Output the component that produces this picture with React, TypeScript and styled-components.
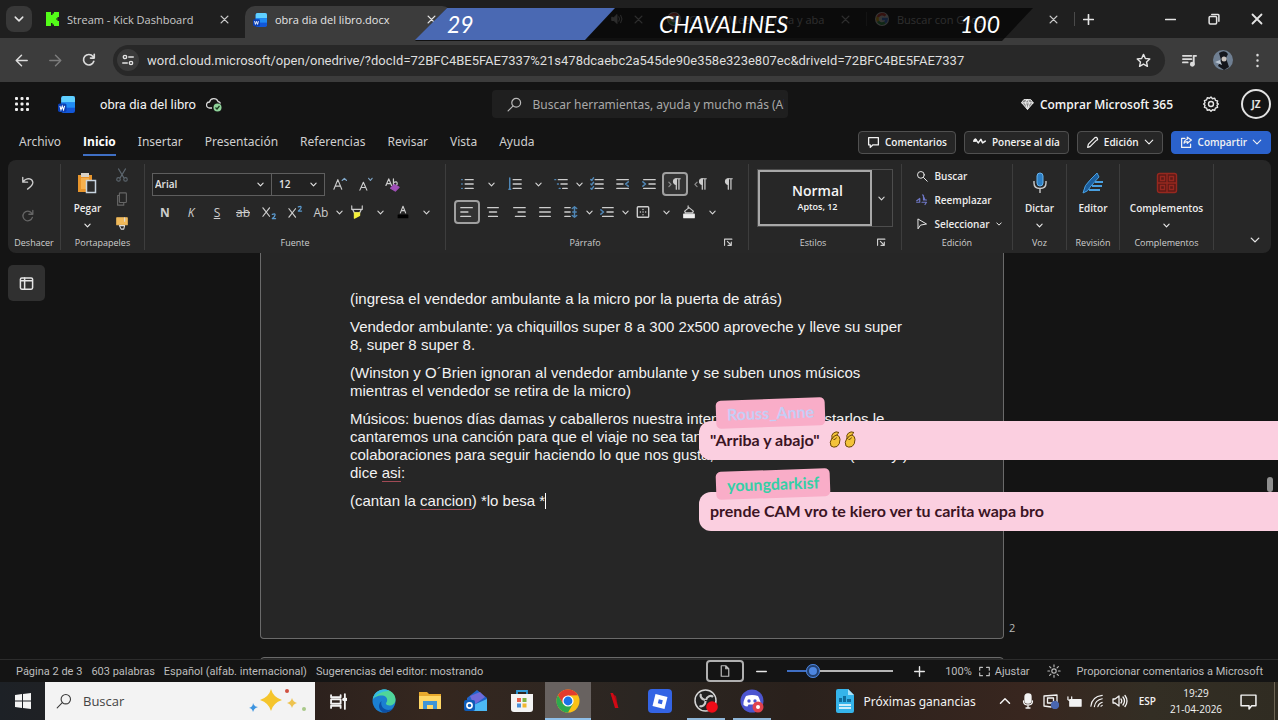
import React from "react";
import styled, { createGlobalStyle, css } from "styled-components";

const ui = `"Open Sans", "Noto Sans", sans-serif`;
const uiWide = `"Noto Sans", "Open Sans", sans-serif`;

const GlobalStyle = createGlobalStyle`
  * { box-sizing: border-box; }
  html, body, #root { height: 100%; }
  body { margin: 0; background: #141414; color: #e4e4e4; font-family: ${ui}; font-size: 12px; }
  button, input, select { font: inherit; color: inherit; background: none; border: 0; padding: 0; margin: 0; outline: 0; }
  button { cursor: pointer; white-space: nowrap; }
  p { margin: 0; }
  svg { display: block; flex: none; }
`;

/* ---------- icons ---------- */

type IconProps = { size?: number; children: React.ReactNode; w?: number; color?: string };
const Icon = ({ size = 16, w = 1.3, color = "currentColor", children }: IconProps) => (
  <svg width={size} height={size} viewBox="0 0 16 16" fill="none" stroke={color} strokeWidth={w} strokeLinecap="round" strokeLinejoin="round" aria-hidden="true">
    {children}
  </svg>
);
const Chevron = ({ size = 7, w = 2.6 }: { size?: number; w?: number }) => (
  <Icon size={size} w={w}><path d="M2 5l6 6 6-6" /></Icon>
);
const Cross = ({ size = 9 }: { size?: number }) => <Icon size={size} w={2.4}><path d="M2 2l12 12M14 2L2 14" /></Icon>;
const Magnifier = ({ size = 16, flip = false, w = 1.3 }: { size?: number; flip?: boolean; w?: number }) => (
  <Icon size={size} w={w}>{flip ? <><circle cx="6.5" cy="6.5" r="4.5" /><path d="M10 10l5 5" /></> : <><circle cx="9.8" cy="6.2" r="4.7" /><path d="M6.3 9.7L1.2 14.8" /></>}</Icon>
);
const WordLogo = ({ size = 16 }: { size?: number }) => (
  <svg width={size} height={size} viewBox="0 0 16 16" aria-hidden="true">
    <rect x="3" y="0" width="13" height="16" rx="2" fill="#1257d8" />
    <path d="M5 0h9a2 2 0 012 2v4H3V2a2 2 0 012-2z" fill="#5fd0ff" />
    <path d="M3 6h13v5H3z" fill="#1f8cf5" />
    <rect x="0" y="7" width="8" height="8" rx="1.5" fill="#0b3fb4" />
    <path d="M1.8 9.2l1 3.8 1.2-3.4L5.2 13l1-3.8" fill="none" stroke="#fff" strokeWidth="1" />
  </svg>
);
const GoogleLogo = () => (
  <svg width="14" height="14" viewBox="0 0 14 14" fill="none" strokeWidth="2.6" aria-hidden="true">
    <circle cx="7" cy="7" r="7" fill="#f4f4f4" />
    <path d="M10.500 3.600A4.700 4.700 0 002.800 5" stroke="#ea4335" />
    <path d="M2.800 5A4.700 4.700 0 003 9.400" stroke="#fbbc05" />
    <path d="M3 9.400A4.700 4.700 0 0010 10.600" stroke="#34a853" />
    <path d="M10 10.600A4.700 4.700 0 0011.600 7H7" stroke="#4285f4" />
  </svg>
);

type ListKind = "bullets" | "numbers" | "levels" | "check" | "outdent" | "indent" | "left" | "center" | "right" | "justify" | "spacing" | "special";
const lineSets: Record<ListKind, string> = {
  bullets: "M6 3h9M6 8h9M6 13h9", numbers: "M6 3h9M6 8h9M6 13h9", levels: "M5 3h10M8 8h7M10 13h5", check: "M6 3h9M6 8h9M6 13h9",
  outdent: "M1 3h13M1 8h7M1 13h13", indent: "M2 3h13M8 8h7M2 13h13",
  left: "M1 3h13M1 8h8M1 13h11", center: "M2 3h12M4 8h8M3 13h10", right: "M2 3h13M7 8h8M4 13h11", justify: "M2 3h12M2 8h12M2 13h12",
  spacing: "M1 3h6M1 8h6M1 13h6", special: "M3 3h12M8 8h7M3 13h12",
};
const accentSets: Partial<Record<ListKind, string>> = {
  bullets: "M2 3h.5M2 8h.5M2 13h.5", numbers: "M2 1v13M1 14h2", levels: "M1 3h1M4 8h1M6 13h1", check: "M1 3l1 1 2-3M1 8l1 1 2-3M1 13l1 1 2-3",
  outdent: "M14 5.500L11 8l3 2.500", indent: "M1 5.500L4 8l-3 2.500", spacing: "M12 2v12M9.500 4L12 2l2.500 2M9.500 12L12 14l2.500-2M10 8h4", special: "M1 5.500L4 8l-3 2.500",
};
const Lines = ({ kind }: { kind: ListKind }) => (
  <Icon size={14} w={1.7}>
    <path d={lineSets[kind]} />
    {accentSets[kind] && <path d={accentSets[kind]} stroke="#4f86b5" />}
  </Icon>
);
const Pilcrow = ({ arrow, back }: { arrow?: boolean; back?: boolean }) => (
  <Icon size={14} w={1.4}>
    <path d="M9 2h5M9.500 2v12M12.500 2v12" /><path d="M9.500 2a3.200 3.200 0 000 6.400z" fill="currentColor" />
    {arrow && <path d={back ? "M3.500 6L1 8.500 3.500 11" : "M1 6l2.500 2.500L1 11"} stroke="#8a8a8a" />}
  </Icon>
);

/* ---------- browser chrome ---------- */

const Screen = styled.div`display: flex; flex-direction: column; height: 100vh; overflow: hidden; position: relative;`;

const TabStrip = styled.div`display: flex; align-items: stretch; height: 38px; background: #1f1f1f; flex: none;`;
const TabMenu = styled.button`width: 26px; height: 26px; margin: 6px 6px 0; border-radius: 8px; background: #383838; display: grid; place-items: center;`;
const Tab = styled.div<{ $active?: boolean }>`
  flex: 0 1 207px; min-width: 0; display: flex; align-items: center; gap: 8px; padding: 0 14px 0 8px; color: #c9c9c9;
  ${(p) => p.$active && css`background: #3c3c3c; border-radius: 10px 10px 0 0; color: #e6e6e6; margin-top: 6px; padding-bottom: 5px;`}
`;
const TabTitle = styled.span`flex: 1; min-width: 0; overflow: hidden; white-space: nowrap; font-size: 11px;`;
const TabEnd = styled.div`width: 1px; height: 14px; background: #4a4a4a; align-self: center;`;
const TabClose = styled.button`display: grid; place-items: center; width: 14px; height: 14px;`;
const NewTab = styled(TabClose)`width: 26px; height: 38px;`;
const WindowButtons = styled.div`margin-left: auto; display: flex;`;
const WindowButton = styled.button`width: 43px; display: grid; place-items: center;`;

const Toolbar = styled.div`display: flex; align-items: center; height: 44px; padding: 0 4px; background: #3c3c3c; flex: none;`;
const NavButton = styled.button<{ $dim?: boolean }>`width: 34px; height: 32px; display: grid; place-items: center; color: ${(p) => (p.$dim ? "#7c7c7c" : "#dcdcdc")};`;
const AddressBar = styled.div`flex: 1; height: 31px; margin: 0 7px; border-radius: 16px; background: #282828; display: flex; align-items: center; gap: 8px; padding: 0 14px 0 4px;`;
const SiteButton = styled.button`width: 22px; height: 22px; border-radius: 50%; background: #3a3a3a; display: grid; place-items: center;`;
const AddressInput = styled.input`flex: 1; min-width: 0; font-family: "Roboto", sans-serif; font-size: 13px; color: #dedede;`;

const Scoreboard = styled.div`position: absolute; top: 8px; left: 415px; width: 618px; height: 33px;`;
const ScoreDark = styled.div`position: absolute; inset: 0; background: rgba(6, 6, 6, 0.8); clip-path: polygon(0 100%, 32px 0, 100% 0, 587px 100%);`;
const ScoreBlue = styled.div`position: absolute; inset: 0 418px 1px 0; background: #4a69b3; clip-path: polygon(0 100%, 32px 0, 100% 0, 170px 100%);`;
const ScoreRow = styled.div`
  position: absolute; inset: 0; display: grid; grid-template-columns: 1fr auto 1fr; align-items: center; padding: 0 33px 0 32px;
  font: italic 400 23px/33px "Lato", cursive; color: #fff;
  span:last-child { text-align: right; }
`;

/* ---------- word header ---------- */

const WordHeader = styled.header`display: grid; grid-template-columns: 1fr 296px 1fr; align-items: center; height: 44px; padding: 0 7px 0 8px; flex: none;`;
const HeaderSide = styled.div<{ $end?: boolean }>`display: flex; align-items: center; justify-content: ${(p) => (p.$end ? "flex-end" : "flex-start")};`;
const AppLauncher = styled.button`width: 16px; height: 16px; margin: 0 28px 0 6px;`;
const DocTitle = styled.h1`font-family: "Roboto", sans-serif; font-size: 13px; font-weight: 400; margin: 0 10px 0 25px; color: #f2f2f2; white-space: nowrap;`;
const SearchBox = styled.label`display: flex; align-items: center; gap: 11px; height: 28px; padding: 0 4px 0 15px; border-radius: 4px; background: #1f1f1f; color: #b9b9b9; input { flex: 1; min-width: 0; font-family: ${uiWide}; font-size: 12px; } input::placeholder { color: #a9a9a9; opacity: 1; }`;
const BuyButton = styled.button`display: flex; align-items: center; gap: 6px; font-size: 12px; font-weight: 600; color: #f4f4f4;`;
const SettingsButton = styled.button`margin: 0 22px 0 30px;`;
const Avatar = styled.button`width: 30px; height: 30px; border: 2px solid #e2e2e2; border-radius: 50%; font-size: 10px; font-weight: 700;`;

const MenuBar = styled.nav`display: flex; align-items: center; gap: 22px; height: 34px; padding: 0 7px 2px 19px; flex: none;`;
const MenuTab = styled.button<{ $active?: boolean }>`
  height: 28px; font-family: ${uiWide}; font-size: 12px; color: #cfcfcf; border-bottom: 2px solid transparent; padding-top: 1px;
  ${(p) => p.$active && css`font-family: ${ui}; font-weight: 700; color: #fff; border-color: #3f6fc4;`}
`;
const MenuActions = styled.div`display: flex; gap: 8px; margin-left: auto;`;
const ActionButton = styled.button<{ $primary?: boolean }>`
  height: 23px; padding: 0 8px; display: flex; align-items: center; gap: 5px; border-radius: 4px; font-size: 10px; font-weight: 600; color: #f2f2f2;
  background: ${(p) => (p.$primary ? "#2b62cc" : "#262626")}; border: 1px solid ${(p) => (p.$primary ? "#2b62cc" : "#505050")};
`;

/* ---------- ribbon ---------- */

const Ribbon = styled.section`display: flex; height: 93px; margin: 0 7px 0 8px; padding: 4px 0 0; background: #272727; border-radius: 8px; flex: none;`;
const Group = styled.div<{ $w: number }>`flex: 0 0 ${(p) => p.$w}px; display: flex; flex-direction: column; border-right: 1px solid #3d3d3d; margin-bottom: 3px;`;
const GroupBody = styled.div<{ $pad?: string }>`flex: 1; min-height: 0; display: flex; justify-content: center; padding: ${(p) => p.$pad ?? "0"};`;
const GroupFooter = styled.div<{ $more?: boolean }>`
  height: 16px; display: grid; grid-template-columns: ${(p) => (p.$more ? "1fr 24px" : "1fr")}; align-items: center;
  text-align: center; font-size: 9px; color: #cfcfcf; white-space: nowrap;
`;
const Stack = styled.div<{ $gap?: number; $align?: string }>`display: flex; flex-direction: column; gap: ${(p) => p.$gap ?? 0}px; align-items: ${(p) => p.$align ?? "center"}; justify-content: center;`;
const PasteTools = styled(Stack)`margin-left: 8px;`;
const ToolRows = styled.div`flex: 1; display: flex; flex-direction: column; gap: 2px; justify-content: center; padding-bottom: 2px;`;
const Row = styled.div`display: flex; align-items: center; height: 26px;`;
const Tool = styled.button<{ $on?: boolean; $dim?: boolean }>`
  width: 26px; height: 24px; flex: none; display: grid; place-items: center; border-radius: 4px; border: 1px solid transparent; font-size: 12px;
  color: ${(p) => (p.$dim ? "#666" : "#cdcdcd")};
  ${(p) => p.$on && css`border: 2px solid #a0a0a0; background: #333;`}
`;
const Drop = styled.button<{ $w: number }>`width: ${(p) => p.$w}px; height: 24px; display: grid; place-items: center; color: #d6d6d6;`;
const BigTool = styled.button`display: flex; flex-direction: column; align-items: center; justify-content: flex-start; padding-top: 8px; gap: 6px; font-size: 10px; font-weight: 600; line-height: 16px; color: #ececec;`;
const Field = styled.label<{ $w: number }>`
  display: flex; align-items: center; width: ${(p) => p.$w}px; height: 23px; border: 1px solid #5e5e5e; padding: 0 7px 0 2px; background: #222;
  & + & { border-left: 0; margin-right: 2px; padding-left: 7px; }
  select { flex: 1; min-width: 0; appearance: none; font-size: 10px; font-weight: 600; }
`;
const StyleBox = styled.div`display: flex; align-items: center; height: 58px; width: 136px; border: 1px solid #4d4d4d;`;
const StyleCard = styled.button`align-self: stretch; width: 114px; border: 2px solid #a8a8a8; display: flex; flex-direction: column; align-items: center; justify-content: center; color: #f5f5f5; font-size: 14px; line-height: 18px; font-weight: 600; padding-left: 6px; small { font-size: 9px; line-height: 14px; }`;
const TextTool = styled.button`display: flex; flex: none; align-items: center; gap: 6px; height: 24px; font-size: 10px; font-weight: 600; color: #ececec;`;
const Collapse = styled.button`margin-left: auto; align-self: flex-end; padding: 8px 11px;`;

/* ---------- document ---------- */

const Canvas = styled.main`flex: 1; min-height: 0; display: flex; overflow: hidden; background: #141414;`;
const Pages = styled.div`flex: 1; min-width: 0;`;
const PageRow = styled.div`display: grid; grid-template-columns: 1fr 744px 1fr; & + & { margin-top: 18px; }`;
const Sheet = styled.article`
  background: #262626; border: 1px solid #6a6a6a; border-top: 0; border-radius: 0 0 4px 4px; height: 386px; padding: 37px 89px 0; color: #f2f2f2;
  font: 15px/18px "Liberation Sans", Arial, sans-serif; white-space: nowrap;
  p + p { margin-top: 10px; }
`;
const NextSheet = styled.article`height: 60px; background: #262626; border: 1px solid #6a6a6a; border-radius: 4px 4px 0 0;`;
const Misspelt = styled.span`border-bottom: 1px solid #a04a55;`;
const Caret = styled.i`display: inline-block; width: 1px; height: 16px; background: #fff; vertical-align: text-bottom;`;
const PaneButton = styled.button`width: 37px; height: 36px; margin: 12px 0 0 8px; border-radius: 5px; background: #303030; display: grid; place-items: center;`;
const PageNumber = styled.span`align-self: end; padding: 0 5px 4px; font-size: 11px; color: #b8b8b8;`;
const Scroller = styled.div`width: 14px; padding: 224px 5px 0 3px; &::after { content: ""; display: block; height: 15px; border-radius: 3px; background: #8f8f8f; }`;

const Chat = styled.aside`position: absolute; right: 0; top: 399px; width: 579px; display: flex; flex-direction: column; gap: 10px; font-family: "Lato", sans-serif; font-weight: 700;`;
const ChatItem = styled.div`display: flex; flex-direction: column; align-items: flex-start;`;
const ChatName = styled.span<{ $color: string }>`height: 28px; padding: 0 11px; margin: 0 0 -6px 17px; border-radius: 5px; background: #f9adc8; color: ${(p) => p.$color}; font-size: 16px; line-height: 27px; transform: rotate(-2deg); z-index: 1;`;
const Bubble = styled.p`align-self: stretch; height: 39px; padding: 0 11px 2px; border-radius: 12px 0 0 12px; background: #fbcfe0; color: #3b1424; font-size: 16px; line-height: 36px; display: flex; align-items: center;`;
const Hands = styled.span`display: flex; gap: 3px; margin-left: 9px;`;

/* ---------- bars at the bottom ---------- */

const StatusBar = styled.footer`display: flex; align-items: center; height: 23px; padding: 0 15px 0 16px; gap: 9px; font-size: 11px; color: #bdbdbd; border-top: 1px solid #2c2c2c; flex: none; white-space: nowrap; font-family: "Roboto", sans-serif;`;
const StatusEnd = styled.div`margin-left: auto; display: flex; align-items: center;`;
const ViewButton = styled.button`width: 38px; height: 22px; border: 2px solid #b0b0b0; border-radius: 4px; display: grid; place-items: center;`;
const ZoomStep = styled.button`width: 34px; display: grid; place-items: center; color: #e8e8e8;`;
const ZoomSlider = styled.input`
  appearance: none; width: 106px; height: 18px; margin: 0 9px;
  &::-webkit-slider-runnable-track { height: 2px; background: linear-gradient(90deg, #3f6fc4 24%, #b5b5b5 24%); }
  &::-webkit-slider-thumb { appearance: none; width: 14px; height: 14px; margin-top: -6px; border-radius: 50%; background: #4d86e0; border: 3px solid #23406f; outline: 1px solid #4d86e0; outline-offset: -1px; }
`;
const ZoomValue = styled.span`margin: 0 7px 0 9px;`;
const StatusButton = styled.button`display: flex; align-items: center; gap: 5px;`;
const SunButton = styled.button`margin: 0 16px 0 17px;`;

const Taskbar = styled.footer`display: flex; align-items: stretch; height: 38px; flex: none; background: linear-gradient(90deg, #1d2126 0, #2c211d 24%, #35271f 34%, #2b2622 50%, #2a211c 62%, #38261f 80%, #332e24 90%, #302c22 100%); color: #f3f3f3;`;
const StartButton = styled.button`width: 45px; display: grid; place-items: center;`;
const TaskSearch = styled.label`width: 270px; display: flex; align-items: center; gap: 11px; padding: 0 8px 0 11px; background: #f3f3f3; color: #3a3a3a; input { flex: 1; min-width: 0; font-size: 13px; } input::placeholder { color: #444; opacity: 1; }`;
const TaskApp = styled.button<{ $state?: "open" | "front" }>`
  width: 46px; display: grid; place-items: center; border-bottom: 2px solid transparent; padding-top: 2px;
  ${(p) => p.$state === "front" && css`background: #686260; border-color: #8fc0ea;`}
  ${(p) => p.$state === "open" && css`width: 38px; margin: 0 4px; border-color: #8fb6d8;`}
`;
const Tray = styled.div`margin-left: auto; display: flex; align-items: center;`;
const News = styled.button`display: flex; align-items: center; gap: 9px; margin-right: 18px; font-family: ${uiWide}; font-size: 12px;`;
const TrayButton = styled.button`width: 23px; height: 38px; display: grid; place-items: center;`;
const Language = styled.button`font-size: 10px; margin: 0 7px 0 7px; font-weight: 600;`;
const Clock = styled.time`width: 66px; text-align: center; font-size: 10px; line-height: 16px; white-space: nowrap;`;
const Notifications = styled.button`padding: 0 17px 0 11px; height: 38px; border-right: 1px solid #6d6555; margin-right: 3px;`;

/* ---------- task bar artwork ---------- */

const Art = ({ size = 24, children }: { size?: number; children: React.ReactNode }) => (
  <svg width={size} height={size} viewBox="0 0 24 24" aria-hidden="true">{children}</svg>
);
const EdgeArt = () => (
  <Art>
    <circle cx="12" cy="12" r="11.500" fill="#1b7fd1" />
    <path d="M1 10C2 4 7 .5 12 .5c6.500 0 11.500 4.500 11.500 10 0 4-3 6-6 6-2 0-3.500-1-3.500-2 0-1 1.200-1.500 1.200-3.500C15.200 8.500 13 6.500 9.500 6.500 5.500 6.500 2 8.500 1 10z" fill="#4fd59a" />
    <path d="M1 10C2 4 7 .5 12 .5c2 0 3.500.4 5 1.200C8 2.500 4 6 1 10z" fill="#35b8e6" />
    <path d="M9.500 12c-1.500 5 2.500 9 7 9 2 0 3.500-.7 5-2-2 3-5.500 4.500-9.500 4.500-5-1-7-8-2.500-11.500z" fill="#0c4fa5" />
  </Art>
);
const FolderArt = () => (
  <Art>
    <path d="M1 3h8l2 2h12v15H1z" fill="#e8a92d" /><path d="M1 7h22v13H1z" fill="#ffd766" /><path d="M5 12h14v8h-4v-4H9v4H5z" fill="#3f95d6" />
  </Art>
);
const OutlookArt = () => (
  <Art>
    <path d="M3 9l10-8 10 8v13H3z" fill="#2063c9" /><path d="M6 7l10-4 5 5-11 8z" fill="#6f6ad8" /><path d="M5 18l18-8v12H6z" fill="#4cb9f5" />
    <rect x="0" y="11" width="11" height="11" rx="2" fill="#0e5cb8" /><circle cx="5.500" cy="16.500" r="2.600" fill="none" stroke="#fff" strokeWidth="1.600" />
  </Art>
);
const StoreArt = () => (
  <Art>
    <path d="M7 6V2h10v4" fill="none" stroke="#2f9bd8" strokeWidth="1.800" /><path d="M1 5h22v15a3 3 0 01-3 3H4a3 3 0 01-3-3z" fill="#f4f4f4" />
    <path d="M7 9h4v4H7z" fill="#e8604a" /><path d="M12.500 9h4v4h-4z" fill="#7cb342" /><path d="M7 14.500h4v4H7z" fill="#4a90d9" /><path d="M12.500 14.500h4v4h-4z" fill="#f0b72f" />
  </Art>
);
const ChromeArt = () => (
  <Art>
    <circle cx="12" cy="12" r="11.500" fill="#fbc116" /><path d="M2 6.200A11.500 11.500 0 0122 6.200L12 6.500 7 15z" fill="#e33b2e" />
    <path d="M2 6.200A11.500 11.500 0 0012 23.500l5-8.700-10 .2z" fill="#2da94f" /><circle cx="12" cy="12" r="5.600" fill="#fff" /><circle cx="12" cy="12" r="4.400" fill="#1a73e8" />
  </Art>
);
const NetflixArt = () => (
  <Art><path d="M8.500 4l5.500 3 2 11-3.500-2z" fill="#a80c14" /><path d="M8.500 4h2.500l5.500 15H13z" fill="#d10a15" /></Art>
);
const RobloxArt = () => (
  <Art><rect width="24" height="24" rx="4" fill="#3464e4" /><path d="M7.500 5l12 3L16.500 20l-12-3z" fill="#fff" /><path d="M10.800 10.300l4 1-1 4-4-1z" fill="#3464e4" /></Art>
);
const ObsArt = () => (
  <Art>
    <circle cx="11.500" cy="11.500" r="10.500" fill="#222" stroke="#d6d6d6" strokeWidth="1.500" />
    <path d="M11 11c-4-1-5-4-4-6M12 11c1-4 5-5 7-3M11.500 12c0 4-3 6-6 5" fill="none" stroke="#c9c9c9" strokeWidth="2.200" /><circle cx="18" cy="18" r="5.800" fill="#f00c18" />
  </Art>
);
const DiscordArt = () => (
  <Art>
    <circle cx="12" cy="12" r="11.500" fill="#4c55cf" /><path d="M6 7q6-2 12 0 3 5 2.500 9-2 1.500-4 1.500l-1-2h-7l-1 2q-2 0-4-1.500Q3 12 6 7z" fill="#fff" />
    <circle cx="9" cy="12" r="1.700" fill="#4c55cf" /><circle cx="15" cy="12" r="1.700" fill="#4c55cf" /><circle cx="18" cy="18" r="5.500" fill="#e0424e" /><circle cx="18" cy="18" r="2" fill="#fff" />
  </Art>
);
const SparkleArt = () => (
  <svg width="58" height="26" viewBox="0 0 58 26" aria-hidden="true">
    <path d="M22 1q2 8 11 11-9 3-11 11-2-8-11-11 9-3 11-11z" fill="#f5c52c" /><path d="M43 10q1 4 5 5-4 1-5 5-1-4-5-5 4-1 5-5z" fill="#eec34f" />
    <path d="M4 15q1 4 5 4-4 1-5 5-1-4-4-4 4-1 4-5z" fill="#3c94e0" /><circle cx="38" cy="3" r="2" fill="#d0503f" /><circle cx="55" cy="21" r="2" fill="#a9c98a" />
  </svg>
);
const PinchingHand = () => (
  <svg width="12" height="17" viewBox="0 0 12 17" aria-hidden="true">
    <path d="M3 7Q2 4 4.500 2 7 0 10 1.500 8 3 8 4q3 1 3 4.500 0 5-3 7-3.500 1.500-6-.5-2-3.500 1-8z" fill="#f3c33a" stroke="#6b4608" /><path d="M3 8q2-4 5-4M4.500 8.500q2 .5 3-2" fill="none" stroke="#6b4608" />
  </svg>
);

const menu = ["Archivo", "Inicio", "Insertar", "Presentación", "Referencias", "Revisar", "Vista", "Ayuda"];

function BrowserChrome() {
  return (
    <>
      <TabStrip>
        <TabMenu aria-label="Buscar pestañas"><Chevron size={10} w={2.4} /></TabMenu>
        <Tab>
          <svg width="13" height="14" viewBox="0 0 13 14" aria-hidden="true"><path d="M0 0h5v3h1.500V1.500H8V0h5v5h-1.500v1.500H10v1h1.500V9H13v5H8v-1.500H6.500V11H5v3H0z" fill="#53fc18" /></svg>
          <TabTitle>Stream - Kick Dashboard</TabTitle><TabClose aria-label="Cerrar"><Cross /></TabClose>
        </Tab>
        <Tab $active><WordLogo size={14} /><TabTitle>obra dia del libro.docx</TabTitle><TabClose aria-label="Cerrar"><Cross /></TabClose></Tab>
        <Tab>
          <TabTitle />
          <Icon size={12}><path d="M1 6v4h3l4 4V2L4 6z" fill="currentColor" /><path d="M10.500 5q2 3 0 6M13 3q3.500 5 0 10" /></Icon>
          <TabClose aria-label="Cerrar"><Cross /></TabClose>
        </Tab>
        <Tab><GoogleLogo /><TabTitle>Google Meet - arriba y aba</TabTitle><TabClose aria-label="Cerrar"><Cross /></TabClose></Tab>
        <TabEnd />
        <Tab><GoogleLogo /><TabTitle>Buscar con Google</TabTitle><TabClose aria-label="Cerrar"><Cross /></TabClose></Tab>
        <TabEnd />
        <NewTab aria-label="Nueva pestaña"><Icon size={11} w={2.4}><path d="M8 1v14M1 8h14" /></Icon></NewTab>
        <WindowButtons>
          <WindowButton aria-label="Minimizar"><Icon size={11} w={2.2}><path d="M1 8h14" /></Icon></WindowButton>
          <WindowButton aria-label="Restaurar"><Icon size={12} w={2}><rect x="1.5" y="4.5" width="10" height="10" rx="1.5" /><path d="M5 2h8.500q1 0 1 1v8" /></Icon></WindowButton>
          <WindowButton aria-label="Cerrar ventana"><Cross size={12} /></WindowButton>
        </WindowButtons>
      </TabStrip>
      <Toolbar>
        <NavButton aria-label="Atrás"><Icon size={13} w={1.8}><path d="M15 8H1.500M8 1.500L1.500 8 8 14.500" /></Icon></NavButton>
        <NavButton aria-label="Adelante" $dim><Icon size={13} w={1.8}><path d="M1 8h13.500M8 1.500L14.500 8 8 14.500" /></Icon></NavButton>
        <NavButton aria-label="Recargar"><Icon size={14} w={1.9}><path d="M13.500 9.500A6 6 0 1112.500 4L14 5.500M14 1.500v4.300H9.700" /></Icon></NavButton>
        <AddressBar>
          <SiteButton aria-label="Información del sitio"><Icon size={12} w={1.9}><circle cx="4" cy="4" r="2.2" /><path d="M9 4h6M1 12h6" /><circle cx="12" cy="12" r="2.2" /></Icon></SiteButton>
          <AddressInput aria-label="Dirección" defaultValue="word.cloud.microsoft/open/onedrive/?docId=72BFC4BE5FAE7337%21s478dcaebc2a545de90e358e323e807ec&driveId=72BFC4BE5FAE7337" />
          <Icon size={15} w={1.5}><path d="M8 1.500l2 4.300 4.700.5-3.500 3.200 1 4.700L8 11.800l-4.200 2.400 1-4.700L1.300 6.300 6 5.800z" /></Icon>
        </AddressBar>
        <NavButton aria-label="Multimedia"><Icon size={15} w={2}><path d="M1 3h9M1 6.500h9M1 10h5M12.500 12V3h2.500" /><circle cx="11" cy="12" r="1.6" fill="currentColor" /></Icon></NavButton>
        <NavButton aria-label="Perfil">
          <svg width="20" height="20" viewBox="0 0 20 20" aria-hidden="true"><circle cx="10" cy="10" r="10" fill="#6f7f92" /><path d="M6 3q6-4 9 1l-2 4 3 9-5 3-6-4 3-6z" fill="#14161c" /><circle cx="11" cy="9" r="2.5" fill="#c9c2bd" /><path d="M2 12l5-2 2 5z" fill="#b8c3d0" /></svg>
        </NavButton>
        <NavButton aria-label="Menú"><Icon size={15} w={2.6}><path d="M8 2.200v.1M8 8v.1M8 13.800v.1" /></Icon></NavButton>
      </Toolbar>
      <Scoreboard><ScoreDark /><ScoreBlue /><ScoreRow><span>29</span><span>CHAVALINES</span><span>100</span></ScoreRow></Scoreboard>
    </>
  );
}

function WordTop() {
  return (
    <>
      <WordHeader>
        <HeaderSide>
          <AppLauncher aria-label="Aplicaciones">
            <svg width="16" height="16" viewBox="0 0 16 16" fill="#f0f0f0" aria-hidden="true">
              {[1, 6.5, 12].flatMap((y) => [1, 6.5, 12].map((x) => <rect key={`${x}-${y}`} x={x} y={y} width="3" height="3" rx="1" />))}
            </svg>
          </AppLauncher>
          <WordLogo size={17} />
          <DocTitle>obra dia del libro</DocTitle>
          <svg width="16" height="16" viewBox="0 0 16 16" fill="none" aria-hidden="true"><path d="M6 12H3.500a3 3 0 010-6A4.500 4.500 0 0112 5.500q2 .5 2.500 2" stroke="#d8d8d8" strokeWidth="1.3" /><circle cx="11.500" cy="11.500" r="4" fill="#8fd39a" /><path d="M9.500 11.500l1.500 1.500 2.500-3" stroke="#17361d" strokeWidth="1.2" /></svg>
        </HeaderSide>
        <SearchBox><Magnifier size={15} /><input aria-label="Buscar" placeholder="Buscar herramientas, ayuda y mucho más (Alt + Q)" /></SearchBox>
        <HeaderSide $end>
          <BuyButton><Icon size={13} w={1.2}><path d="M4 2h8l3 4-7 8-7-8z" fill="#8c8c8c" /><path d="M1 6h14M5.500 6L8 14l2.500-8L8 2z" /></Icon>Comprar Microsoft 365</BuyButton>
          <SettingsButton aria-label="Configuración"><Icon size={16} w={1.4}><path d="M8 1l1.500 1.700 2.200-.6.700 2.200 2.200.7-.6 2.200L15.500 8 14 9.200l.6 2.200-2.200.7-.7 2.200-2.200-.6L8 15.200l-1.500-1.500-2.200.6-.7-2.200-2.200-.7.600-2.200L.7 8 2 6.800l-.6-2.200 2.200-.7.700-2.200 2.200.6z" /><circle cx="8" cy="8" r="2.5" /></Icon></SettingsButton>
          <Avatar>JZ</Avatar>
        </HeaderSide>
      </WordHeader>
      <MenuBar>
        {menu.map((m) => <MenuTab key={m} $active={m === "Inicio"}>{m}</MenuTab>)}
        <MenuActions>
          <ActionButton><Icon size={13} w={1.6}><path d="M2 2h12v9H7l-3 3v-3H2z" /></Icon>Comentarios</ActionButton>
          <ActionButton><Icon size={14} w={1.8}><path d="M1 7l2-2 3 4 3-4 2 4 3-2" /><circle cx="2.500" cy="6" r="1" /></Icon>Ponerse al día</ActionButton>
          <ActionButton><Icon size={13} w={1.5}><path d="M2 14l1-4 8-8q2-1 3 1t-1 2l-8 8z" /></Icon>Edición<Chevron size={10} w={1.8} /></ActionButton>
          <ActionButton $primary><Icon size={13} w={1.5}><path d="M6 3H2v11h11v-4M9 1.500L14 5l-5 4V7q-3 0-4 2 0-4 4-5z" /></Icon>Compartir<Chevron size={10} w={1.8} /></ActionButton>
        </MenuActions>
      </MenuBar>
    </>
  );
}

const Launcher = () => <button aria-label="Más opciones"><Icon size={9} w={2}><path d="M1 13V2h13M6 6l6 6M13 7v6H7" /></Icon></button>;
const Footer = ({ label, more }: { label: string; more?: boolean }) => <GroupFooter $more={more}><span>{label}</span>{more && <Launcher />}</GroupFooter>;

function WordRibbon() {
  return (
    <Ribbon>
      <Group $w={53}>
        <GroupBody $pad="0 12px 0 0">
          <Stack $gap={9}>
            <Tool aria-label="Deshacer"><Icon size={14} w={1.5}><path d="M2 1.500V7h5.500M2 7q3-4 7-4 4 .5 4.500 4t-6 8" /></Icon></Tool>
            <Tool aria-label="Rehacer" $dim><Icon size={14} w={1.5}><path d="M13 9.500A5.500 5.500 0 1112 4.500L13.500 6M13.500 1.500V6H9" /></Icon></Tool>
          </Stack>
        </GroupBody>
        <Footer label="Deshacer" />
      </Group>
      <Group $w={84}>
        <GroupBody $pad="0 0 0 4px">
          <BigTool>
            <svg width="20" height="22" viewBox="0 0 20 22" aria-hidden="true"><path d="M1 3h14v17H1z" fill="#e8952c" /><path d="M4 6h8v11H4z" fill="#f6b04d" /><path d="M4 1h8v4H4z" fill="#d9d3c8" /><path d="M9.500 8.500h9v12h-9z" fill="#2b2b2b" stroke="#c8d4e0" strokeWidth="1.5" /></svg>
            Pegar<Chevron />
          </BigTool>
          <PasteTools>
            <Tool aria-label="Cortar" $dim><Icon size={14} w={1.3} color="#5c666e"><path d="M4 1l6 10M12 1L6 11" /><circle cx="4" cy="13" r="2" /><circle cx="12" cy="13" r="2" /></Icon></Tool>
            <Tool aria-label="Copiar" $dim><Icon size={14} w={1.3}><rect x="5" y="1" width="8" height="11" rx="1" /><path d="M5 4H3v11h7v-2" /></Icon></Tool>
            <Tool aria-label="Copiar formato"><Icon size={14} w={1.2} color="#ddd"><path d="M2 2h12v8H2z" fill="#f0b95a" stroke="#f0b95a" /><path d="M11 2v4M5 11h6l-1 4H7z" /></Icon></Tool>
          </PasteTools>
        </GroupBody>
        <Footer label="Portapapeles" />
      </Group>
      <Group $w={301}>
        <GroupBody $pad="0 7px">
          <ToolRows>
            <Row>
              <Field $w={120}><select aria-label="Fuente"><option>Arial</option></select><Chevron /></Field>
              <Field $w={53}><select aria-label="Tamaño"><option>12</option></select><Chevron /></Field>
              <Tool aria-label="Aumentar"><Icon size={14}><path d="M1 14L5.500 3 10 14M2.500 10.500h6" /><path d="M10.500 4L13 1.500 15.500 4" stroke="#7fa6c8" /></Icon></Tool>
              <Tool aria-label="Reducir"><Icon size={14}><path d="M1 15L5 6l4 9M2.500 12h5" /><path d="M11 1.500L13 4l2-2.500" stroke="#7fa6c8" /></Icon></Tool>
              <Tool aria-label="Borrar formato"><Icon size={15}><path d="M1 9l3-7 3 7M2 7h4M9 2v7M9 6q4-2 4 1t-4 2" /><path d="M6 12l4-4 5 3-4 4z" fill="#a04fb8" stroke="#a04fb8" /></Icon></Tool>
            </Row>
            <Row>
              <Tool><b>N</b></Tool><Tool><i>K</i></Tool><Tool><u>S</u></Tool><Tool><s>ab</s></Tool>
              <Tool aria-label="Subíndice"><Icon size={15}><path d="M1 3l7 9M8 3l-7 9" /><path d="M11 10q3-1.500 3 .5T11 14.500h3.500" stroke="#5b9bd0" /></Icon></Tool>
              <Tool aria-label="Superíndice"><Icon size={15}><path d="M1 4l7 9M8 4l-7 9" /><path d="M11 2q3-1.500 3 .5T11 6.500h3.500" stroke="#5b9bd0" /></Icon></Tool>
              <Tool>Ab</Tool><Drop $w={10} aria-label="Mayúsculas"><Chevron /></Drop>
              <Tool aria-label="Resaltar"><Icon size={14}><path d="M2 1v4h12V1M3 5l2 4h6l2-4" /><path d="M5 9h6v3l-6 3z" fill="#f4f03c" stroke="#f4f03c" /></Icon></Tool><Drop $w={20} aria-label="Color de resaltado"><Chevron /></Drop>
              <Tool aria-label="Color de fuente"><Icon size={14}><path d="M5 9l3-7.500L11 9M6 6.500h4" /><path d="M2.500 11.500h11v3h-11z" fill="#000" stroke="#000" /></Icon></Tool><Drop $w={20} aria-label="Color"><Chevron /></Drop>
            </Row>
          </ToolRows>
        </GroupBody>
        <Footer label="Fuente" />
      </Group>
      <Group $w={303}>
        <GroupBody $pad="0 8px">
          <ToolRows>
            <Row>
              <Tool aria-label="Viñetas"><Lines kind="bullets" /></Tool><Drop $w={22} aria-label="Tipo de viñeta"><Chevron /></Drop>
              <Tool aria-label="Numeración"><Lines kind="numbers" /></Tool><Drop $w={20} aria-label="Tipo de número"><Chevron /></Drop>
              <Tool aria-label="Multinivel"><Lines kind="levels" /></Tool><Drop $w={10} aria-label="Niveles"><Chevron /></Drop>
              <Tool aria-label="Lista"><Lines kind="check" /></Tool><Tool aria-label="Menos sangría"><Lines kind="outdent" /></Tool><Tool aria-label="Más sangría"><Lines kind="indent" /></Tool>
              <Tool $on aria-label="Izquierda a derecha"><Pilcrow arrow /></Tool><Tool aria-label="Derecha a izquierda"><Pilcrow arrow back /></Tool><Tool aria-label="Marcas"><Pilcrow /></Tool>
            </Row>
            <Row>
              <Tool $on aria-label="Izquierda"><Lines kind="left" /></Tool><Tool aria-label="Centro"><Lines kind="center" /></Tool><Tool aria-label="Derecha"><Lines kind="right" /></Tool><Tool aria-label="Justificar"><Lines kind="justify" /></Tool>
              <Tool aria-label="Interlineado"><Lines kind="spacing" /></Tool><Drop $w={10} aria-label="Espaciado"><Chevron /></Drop>
              <Tool aria-label="Sangría especial"><Lines kind="special" /></Tool><Drop $w={10} aria-label="Sangrías"><Chevron /></Drop>
              <Tool aria-label="Bordes"><Icon size={14} w={1.6}><rect x="1.5" y="2" width="13" height="12" rx="1" /><path d="M5 8h.1M8 8h.1M11 8h.1M8 5v.1M8 11v.1" /></Icon></Tool><Drop $w={20} aria-label="Tipo de borde"><Chevron /></Drop>
              <Tool aria-label="Sombreado"><Icon size={14} w={1.3}><path d="M7 1v3M3 7l5-4 5 4-1 2H4z" /><path d="M2 10.500h12v4H2z" fill="#eee" stroke="#eee" /></Icon></Tool><Drop $w={20} aria-label="Color de sombreado"><Chevron /></Drop>
            </Row>
          </ToolRows>
        </GroupBody>
        <Footer label="Párrafo" more />
      </Group>
      <Group $w={153}>
        <GroupBody $pad="5px 8px 0 7px">
          <StyleBox><StyleCard>Normal<small>Aptos, 12</small></StyleCard><Drop $w={20} aria-label="Más estilos"><Chevron /></Drop></StyleBox>
        </GroupBody>
        <Footer label="Estilos" more />
      </Group>
      <Group $w={111}>
        <GroupBody $pad="1px 0 0 4px">
          <Stack $align="flex-start">
            <TextTool><Magnifier size={12} flip />Buscar</TextTool>
            <TextTool><Icon size={12} w={1.6} color="#6f78c8"><path d="M9 1l3 7M10 2v6h4M1 9l4-3M5 6v5H1M8 11h6l-2 3" /></Icon>Reemplazar</TextTool>
            <TextTool><Icon size={12}><path d="M3 1.500l11 6.500-8 1.500L3 14z" /></Icon>Seleccionar<Chevron size={6} /></TextTool>
          </Stack>
        </GroupBody>
        <Footer label="Edición" />
      </Group>
      <Group $w={54}>
        <GroupBody>
          <BigTool>
            <svg width="16" height="22" viewBox="0 0 16 22" fill="none" aria-hidden="true"><rect x="5" y="1" width="6" height="13" rx="3" fill="#2d7fc4" stroke="#67b4ee" /><path d="M2 9v2q0 5.500 6 5.500t6-5.500V9M8 17v4" stroke="#c9c9c9" strokeWidth="1.4" /></svg>
            Dictar<Chevron />
          </BigTool>
        </GroupBody>
        <Footer label="Voz" />
      </Group>
      <Group $w={53}>
        <GroupBody>
          <BigTool>
            <svg width="22" height="22" viewBox="0 0 22 22" fill="none" aria-hidden="true"><path d="M1 21q1-8 8-14l6-6 2 4-8 9q-3 6-8 7z" fill="#1c5f9e" stroke="#4aa0e0" /><path d="M13 10h8M10 14h10M7 18h11" stroke="#4aa0e0" strokeWidth="2.2" /></svg>
            Editor
          </BigTool>
        </GroupBody>
        <Footer label="Revisión" />
      </Group>
      <Group $w={94}>
        <GroupBody>
          <BigTool>
            <svg width="22" height="22" viewBox="0 0 22 22" fill="none" stroke="#96281f" strokeWidth="1.4" aria-hidden="true"><rect x="1.5" y="1.5" width="19" height="19" rx="2" fill="#5c1a17" /><path d="M11 1.500v19M1.500 11h19M4.500 4.500h4v4h-4zM13.500 4.500h4v4h-4zM4.500 13.500h4v4h-4zM13.500 13.500h4v4h-4z" /></svg>
            Complementos<Chevron />
          </BigTool>
        </GroupBody>
        <Footer label="Complementos" />
      </Group>
      <Collapse aria-label="Contraer cinta"><Chevron size={10} w={2.2} /></Collapse>
    </Ribbon>
  );
}

function Document() {
  return (
    <Canvas>
      <Pages>
        <PageRow>
          <div><PaneButton aria-label="Navegación"><Icon size={15} w={1.6}><rect x="1.5" y="2" width="13" height="12" rx="1.5" /><path d="M6 2v12M2 5h12" /></Icon></PaneButton></div>
          <Sheet>
            <p>(ingresa el vendedor ambulante a la micro por la puerta de atrás)</p>
            <p>Vendedor ambulante: ya chiquillos super 8 a 300 2x500 aproveche y lleve su super<br />8, super 8 super 8.</p>
            <p>(Winston y O´Brien ignoran al vendedor ambulante y se suben unos músicos<br />mientras el vendedor se retira de la micro)</p>
            <p>
              Músicos: buenos días damas y caballeros nuestra intención no es molestarlos le<br />
              cantaremos una canción para que el viaje no sea tan aburrido y se aceptan<br />
              colaboraciones para seguir haciendo lo que nos gusta, la canción se llama (no soy )<br />
              dice <Misspelt>asi</Misspelt>:
            </p>
            <p>(cantan la <Misspelt>cancion</Misspelt>) *lo besa *<Caret /></p>
          </Sheet>
          <PageNumber>2</PageNumber>
        </PageRow>
        <PageRow><div /><NextSheet /><div /></PageRow>
      </Pages>
      <Scroller />
    </Canvas>
  );
}

function Bottom() {
  return (
    <>
      <StatusBar>
        <span>Página 2 de 3</span><span>603 palabras</span><span>Español (alfab. internacional)</span><span>Sugerencias del editor: mostrando</span>
        <StatusEnd>
          <ViewButton aria-label="Vista de página"><Icon size={12} w={1.6}><path d="M3 1h6l4 4v10H3zM9 1v4h4" /></Icon></ViewButton>
          <ZoomStep aria-label="Alejar"><Icon size={11} w={2}><path d="M1 8h14" /></Icon></ZoomStep>
          <ZoomSlider type="range" aria-label="Zoom" min={0} max={100} defaultValue={20} />
          <ZoomStep aria-label="Acercar"><Icon size={11} w={2}><path d="M1 8h14M8 1v14" /></Icon></ZoomStep>
          <ZoomValue>100%</ZoomValue>
          <StatusButton><Icon size={11} w={1.7}><path d="M1 6V2h4M11 2h4v4M15 10v4h-4M5 14H1v-4" /></Icon>Ajustar</StatusButton>
          <SunButton aria-label="Modo de lectura"><Icon size={14} w={1.3}><circle cx="8" cy="8" r="2.5" /><path d="M8 1v2M8 13v2M1 8h2M13 8h2M3 3l1.500 1.500M11.500 11.500L13 13M13 3l-1.500 1.500M4.500 11.500L3 13" /></Icon></SunButton>
          <StatusButton>Proporcionar comentarios a Microsoft</StatusButton>
        </StatusEnd>
      </StatusBar>
      <Taskbar>
        <StartButton aria-label="Inicio"><svg width="16" height="16" viewBox="0 0 16 16" fill="#f5f5f5" aria-hidden="true"><path d="M0 2l7-1v6.500H0zM8 .9L16 0v7.500H8zM0 8.500h7V15l-7-1zM8 8.500h8V16l-8-1z" /></svg></StartButton>
        <TaskSearch><Magnifier size={16} w={1.1} /><input aria-label="Buscar en Windows" placeholder="Buscar" /><SparkleArt /></TaskSearch>
        <TaskApp aria-label="Vista de tareas"><Icon size={17} w={1.7}><path d="M1 2v2h9V2M1 14v-2h9v2M1 6h9v4H1zM14 1v14" /><path d="M13 6h2" strokeWidth="3" /></Icon></TaskApp>
        <TaskApp aria-label="Edge"><EdgeArt /></TaskApp>
        <TaskApp aria-label="Explorador"><FolderArt /></TaskApp>
        <TaskApp aria-label="Outlook"><OutlookArt /></TaskApp>
        <TaskApp aria-label="Store"><StoreArt /></TaskApp>
        <TaskApp aria-label="Chrome" $state="front"><ChromeArt /></TaskApp>
        <TaskApp aria-label="Netflix"><NetflixArt /></TaskApp>
        <TaskApp aria-label="Roblox"><RobloxArt /></TaskApp>
        <TaskApp aria-label="OBS" $state="open"><ObsArt /></TaskApp>
        <TaskApp aria-label="Discord" $state="open"><DiscordArt /></TaskApp>
        <Tray>
          <News>
            <svg width="18" height="24" viewBox="0 0 18 24" aria-hidden="true"><path d="M0 2q0-2 2-2h10l6 6v16q0 2-2 2H2q-2 0-2-2z" fill="#35b4ea" /><path d="M12 0l6 6h-6z" fill="#a9e2fa" /><path d="M3 13V9h3v4zM7 13V7h3v6zM11 13v-3h4v3z" fill="#106c9c" /><path d="M3 16h12M3 19h12" stroke="#fff" strokeWidth="1.5" /></svg>
            Próximas ganancias
          </News>
          <TrayButton aria-label="Iconos ocultos"><Icon size={12} w={2}><path d="M2 11l6-6 6 6" /></Icon></TrayButton>
          <TrayButton aria-label="Micrófono"><Icon size={16}><rect x="5" y="1" width="6" height="9" rx="2.5" fill="currentColor" /><path d="M3.500 8q0 4 4.500 4t4.500-4M8 12v3M6 15h4" /></Icon></TrayButton>
          <TrayButton aria-label="Pantalla"><Icon size={16}><path d="M14 9V2L1 3v10l7 1" /><rect x="4.5" y="5" width="6" height="5" /><circle cx="12" cy="12" r="3.5" fill="#4a67b0" stroke="#4a67b0" /></Icon></TrayButton>
          <TrayButton aria-label="Batería"><Icon size={15}><path d="M3 6h12v7H3z" fill="currentColor" /><path d="M1 3v3q2 2 4 0V3" /></Icon></TrayButton>
          <TrayButton aria-label="Red"><Icon size={14}><path d="M1 14Q2 3 14 1.500M5 14.500Q6 7 14 5.500M9 14.500q1-4 5-5M12.500 14l1.500-1" /></Icon></TrayButton>
          <TrayButton aria-label="Volumen"><Icon size={16}><path d="M1 6v4h2l4 3V3L3 6zM9 6q1.500 2 0 4M11 4q3 4 0 8M13 2.500q4 5.500 0 11" /></Icon></TrayButton>
          <Language>ESP</Language>
          <Clock>19:29<br />21-04-2026</Clock>
          <Notifications aria-label="Notificaciones"><Icon size={17} w={1.4}><path d="M1 2h14v10h-4l-2.500 3V12H1z" /></Icon></Notifications>
        </Tray>
      </Taskbar>
    </>
  );
}

export default function App() {
  return (
    <Screen>
      <GlobalStyle />
      <BrowserChrome />
      <WordTop />
      <WordRibbon />
      <Document />
      <Bottom />
      <Chat>
        <ChatItem><ChatName $color="#c5cdf5">Rouss_Anne</ChatName><Bubble>"Arriba y abajo"<Hands><PinchingHand /><PinchingHand /></Hands></Bubble></ChatItem>
        <ChatItem><ChatName $color="#35cfa6">youngdarkisf</ChatName><Bubble>prende CAM vro te kiero ver tu carita wapa bro</Bubble></ChatItem>
      </Chat>
    </Screen>
  );
}
